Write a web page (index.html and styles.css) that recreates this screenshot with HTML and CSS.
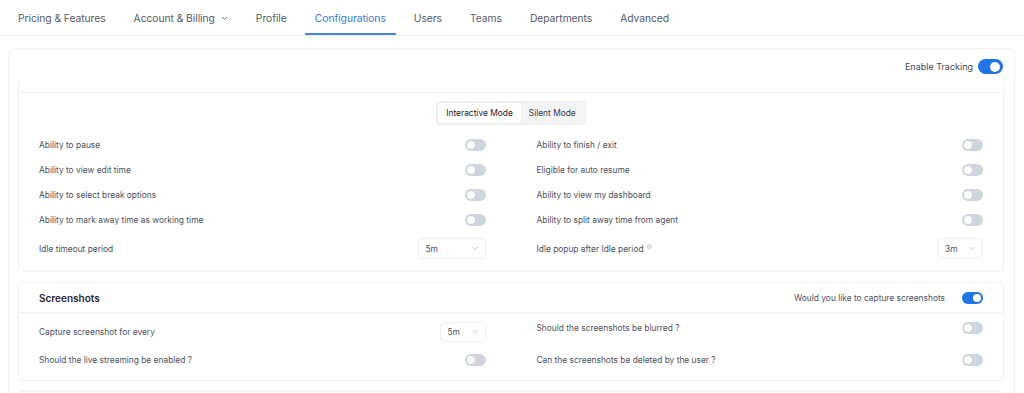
FILE: index.html
```html
<!DOCTYPE html>
<html>
<head>
<meta charset="utf-8">
<link rel="stylesheet" href="styles.css">
</head>
<body>
<nav class="tabs">
  <div class="tab">Pricing &amp; Features</div>
  <div class="tab">Account &amp; Billing <svg class="chev" width="7" height="5" viewBox="0 0 7 5"><path d="M1 1l2.5 2.5L6 1" fill="none" stroke="#666" stroke-width="1"/></svg></div>
  <div class="tab">Profile</div>
  <div class="tab active">Configurations</div>
  <div class="tab">Users</div>
  <div class="tab">Teams</div>
  <div class="tab">Departments</div>
  <div class="tab">Advanced</div>
</nav>
<main class="outer">
  <div class="track-row">
    <span class="track-label">Enable Tracking</span>
    <span class="toggle on big"></span>
  </div>
  <section class="card first">
    <div class="card-top"></div>
    <div class="seg-wrap">
      <div class="seg">
        <span class="seg-item active">Interactive Mode</span>
        <span class="seg-item">Silent Mode</span>
      </div>
    </div>
    <div class="grid">
      <div class="row"><span class="label">Ability to pause</span><span class="toggle"></span></div>
      <div class="row"><span class="label">Ability to finish / exit</span><span class="toggle"></span></div>
      <div class="row"><span class="label">Ability to view edit time</span><span class="toggle"></span></div>
      <div class="row"><span class="label">Eligible for auto resume</span><span class="toggle"></span></div>
      <div class="row"><span class="label">Ability to select break options</span><span class="toggle"></span></div>
      <div class="row"><span class="label">Ability to view my dashboard</span><span class="toggle"></span></div>
      <div class="row"><span class="label">Ability to mark away time as working time</span><span class="toggle"></span></div>
      <div class="row"><span class="label">Ability to split away time from agent</span><span class="toggle"></span></div>
      <div class="row tall"><span class="label">Idle timeout period</span><span class="select wide"><span>5m</span><svg class="schev" width="8" height="5" viewBox="0 0 8 5"><path d="M1 1l3 3 3-3" fill="none" stroke="#c3c7cf" stroke-width="0.8"/></svg></span></div>
      <div class="row tall"><span class="label">Idle popup after Idle period <svg class="info" width="5" height="5" viewBox="0 0 6 6"><circle cx="3" cy="3" r="2.5" fill="none" stroke="#aaa" stroke-width="0.7"/><circle cx="3" cy="3" r="0.8" fill="#aaa"/></svg></span><span class="select"><span>3m</span><svg class="schev" width="8" height="5" viewBox="0 0 8 5"><path d="M1 1l3 3 3-3" fill="none" stroke="#c3c7cf" stroke-width="0.8"/></svg></span></div>
    </div>
  </section>
  <section class="card second">
    <div class="card-head">
      <span class="title">Screenshots</span>
      <span class="head-right"><span class="label">Would you like to capture screenshots</span><span class="toggle on"></span></span>
    </div>
    <div class="grid g2">
      <div class="row r1l"><span class="label">Capture screenshot for every</span><span class="select"><span>5m</span><svg class="schev" width="8" height="5" viewBox="0 0 8 5"><path d="M1 1l3 3 3-3" fill="none" stroke="#c3c7cf" stroke-width="0.8"/></svg></span></div>
      <div class="row r1r"><span class="label">Should the screenshots be blurred ?</span><span class="toggle"></span></div>
      <div class="row r2"><span class="label">Should the live streaming be enabled ?</span><span class="toggle"></span></div>
      <div class="row r2"><span class="label">Can the screenshots be deleted by the user ?</span><span class="toggle"></span></div>
    </div>
  </section>
  <section class="card third"></section>
</main>
</body>
</html>
```

FILE: styles.css
```css
* { box-sizing: border-box; }
html, body { margin: 0; padding: 0; background: #fff; overflow: hidden; }
body { font-family: Inter, "Noto Sans", sans-serif; color: #4b5260; height: 393px; }

.tabs {
  display: flex;
  gap: 8px;
  padding-left: 8px;
  height: 36px;
  border-bottom: 1px solid #eeeff1;
}
.tab {
  padding: 0 10px;
  height: 35px;
  display: flex;
  align-items: center;
  font-size: 10.3px;
  color: #555a62;
  gap: 6px;
  letter-spacing: -0.05px;
}
.tab.active {
  color: #3d7bd1;
  border-bottom: 2px solid #4a84d6;
  padding-top: 2px;
}
.chev { margin-top: 1px; }

.outer {
  margin: 12px 9px 0 8px;
  border: 1px solid #f0f1f3;
  border-radius: 6px;
  padding: 0 10px 0 9px;
  height: 400px;
}
.track-row {
  height: 33px;
  display: flex;
  align-items: center;
  justify-content: flex-end;
  gap: 5px;
  padding-right: 1px;
  padding-top: 2px;
}
.track-label { font-size: 9px; color: #444a55; }

.toggle {
  display: inline-block;
  position: relative;
  width: 21px;
  height: 12px;
  border-radius: 6px;
  background: #cfd6df;
  flex: none;
}
.toggle::after {
  content: "";
  position: absolute;
  left: 2px;
  top: 2px;
  width: 8px;
  height: 8px;
  border-radius: 50%;
  background: #fff;
  box-shadow: 0 0 1px rgba(0,0,0,0.15);
}
.toggle.on { background: #1f73e6; }
.toggle.on::after { left: auto; right: 2px; }
.toggle.big { width: 25px; height: 15px; border-radius: 8px; }
.toggle.big::after { width: 10px; height: 10px; top: 2.5px; right: 3px; }

.card {
  border: 1px solid #eef0f2;
  border-radius: 5px;
  background: #fff;
}
.card.first {
  border-top-color: #fff;
  border-radius: 0 0 5px 5px;
  padding: 0 20px 6px 20px;
}
.card-top {
  height: 10px;
  border-bottom: 1px solid #eef0f2;
  margin: 0 -20px;
}
.seg-wrap {
  display: flex;
  justify-content: center;
  padding-top: 8px;
  margin-bottom: 7px;
}
.seg {
  display: flex;
  background: #f3f4f6;
  border: 1px solid #eceef1;
  border-radius: 4px;
  padding: 1px;
  height: 24px;
}
.seg-item {
  display: flex;
  align-items: center;
  padding: 0 8px;
  font-size: 8.4px;
  color: #333842;
  border-radius: 3px;
}
.seg-item.active {
  background: #fff;
  box-shadow: 0 0 2px rgba(0,0,0,0.06);
  color: #222;
}

.grid {
  display: grid;
  grid-template-columns: 1fr 1fr;
  column-gap: 51px;
}
.row {
  height: 25px;
  display: flex;
  align-items: center;
  justify-content: space-between;
}
.row.tall { height: 33px; }
.label { font-size: 8.4px; color: #4a505c; white-space: nowrap; }
.info { vertical-align: top; margin-left: 1px; }

.select {
  display: inline-flex;
  align-items: center;
  justify-content: space-between;
  width: 46px;
  height: 20px;
  border: 1px solid #eceef1;
  border-radius: 4px;
  padding: 0 6px 0 7px;
  font-size: 8.4px;
  color: #4a505c;
}
.select.wide { width: 68px; }
.row.tall .select { height: 21px; }

.card.second {
  margin-top: 10px;
  padding: 0 20px 5px 20px;
}
.card-head {
  height: 30px;
  display: flex;
  align-items: center;
  justify-content: space-between;
  border-bottom: 1px solid #f0f1f3;
  margin: 0 -20px;
  padding: 0 20px;
}
.title { font-size: 10px; font-weight: 600; color: #1f2530; }
.head-right { display: flex; align-items: center; gap: 17px; }
.g2 { padding-top: 5px; align-items: start; }
.r1l { height: 27px; }
.r1r { height: 20px; }
.r2 { height: 30px; }

.card.third { margin-top: 10px; height: 40px; }
```
